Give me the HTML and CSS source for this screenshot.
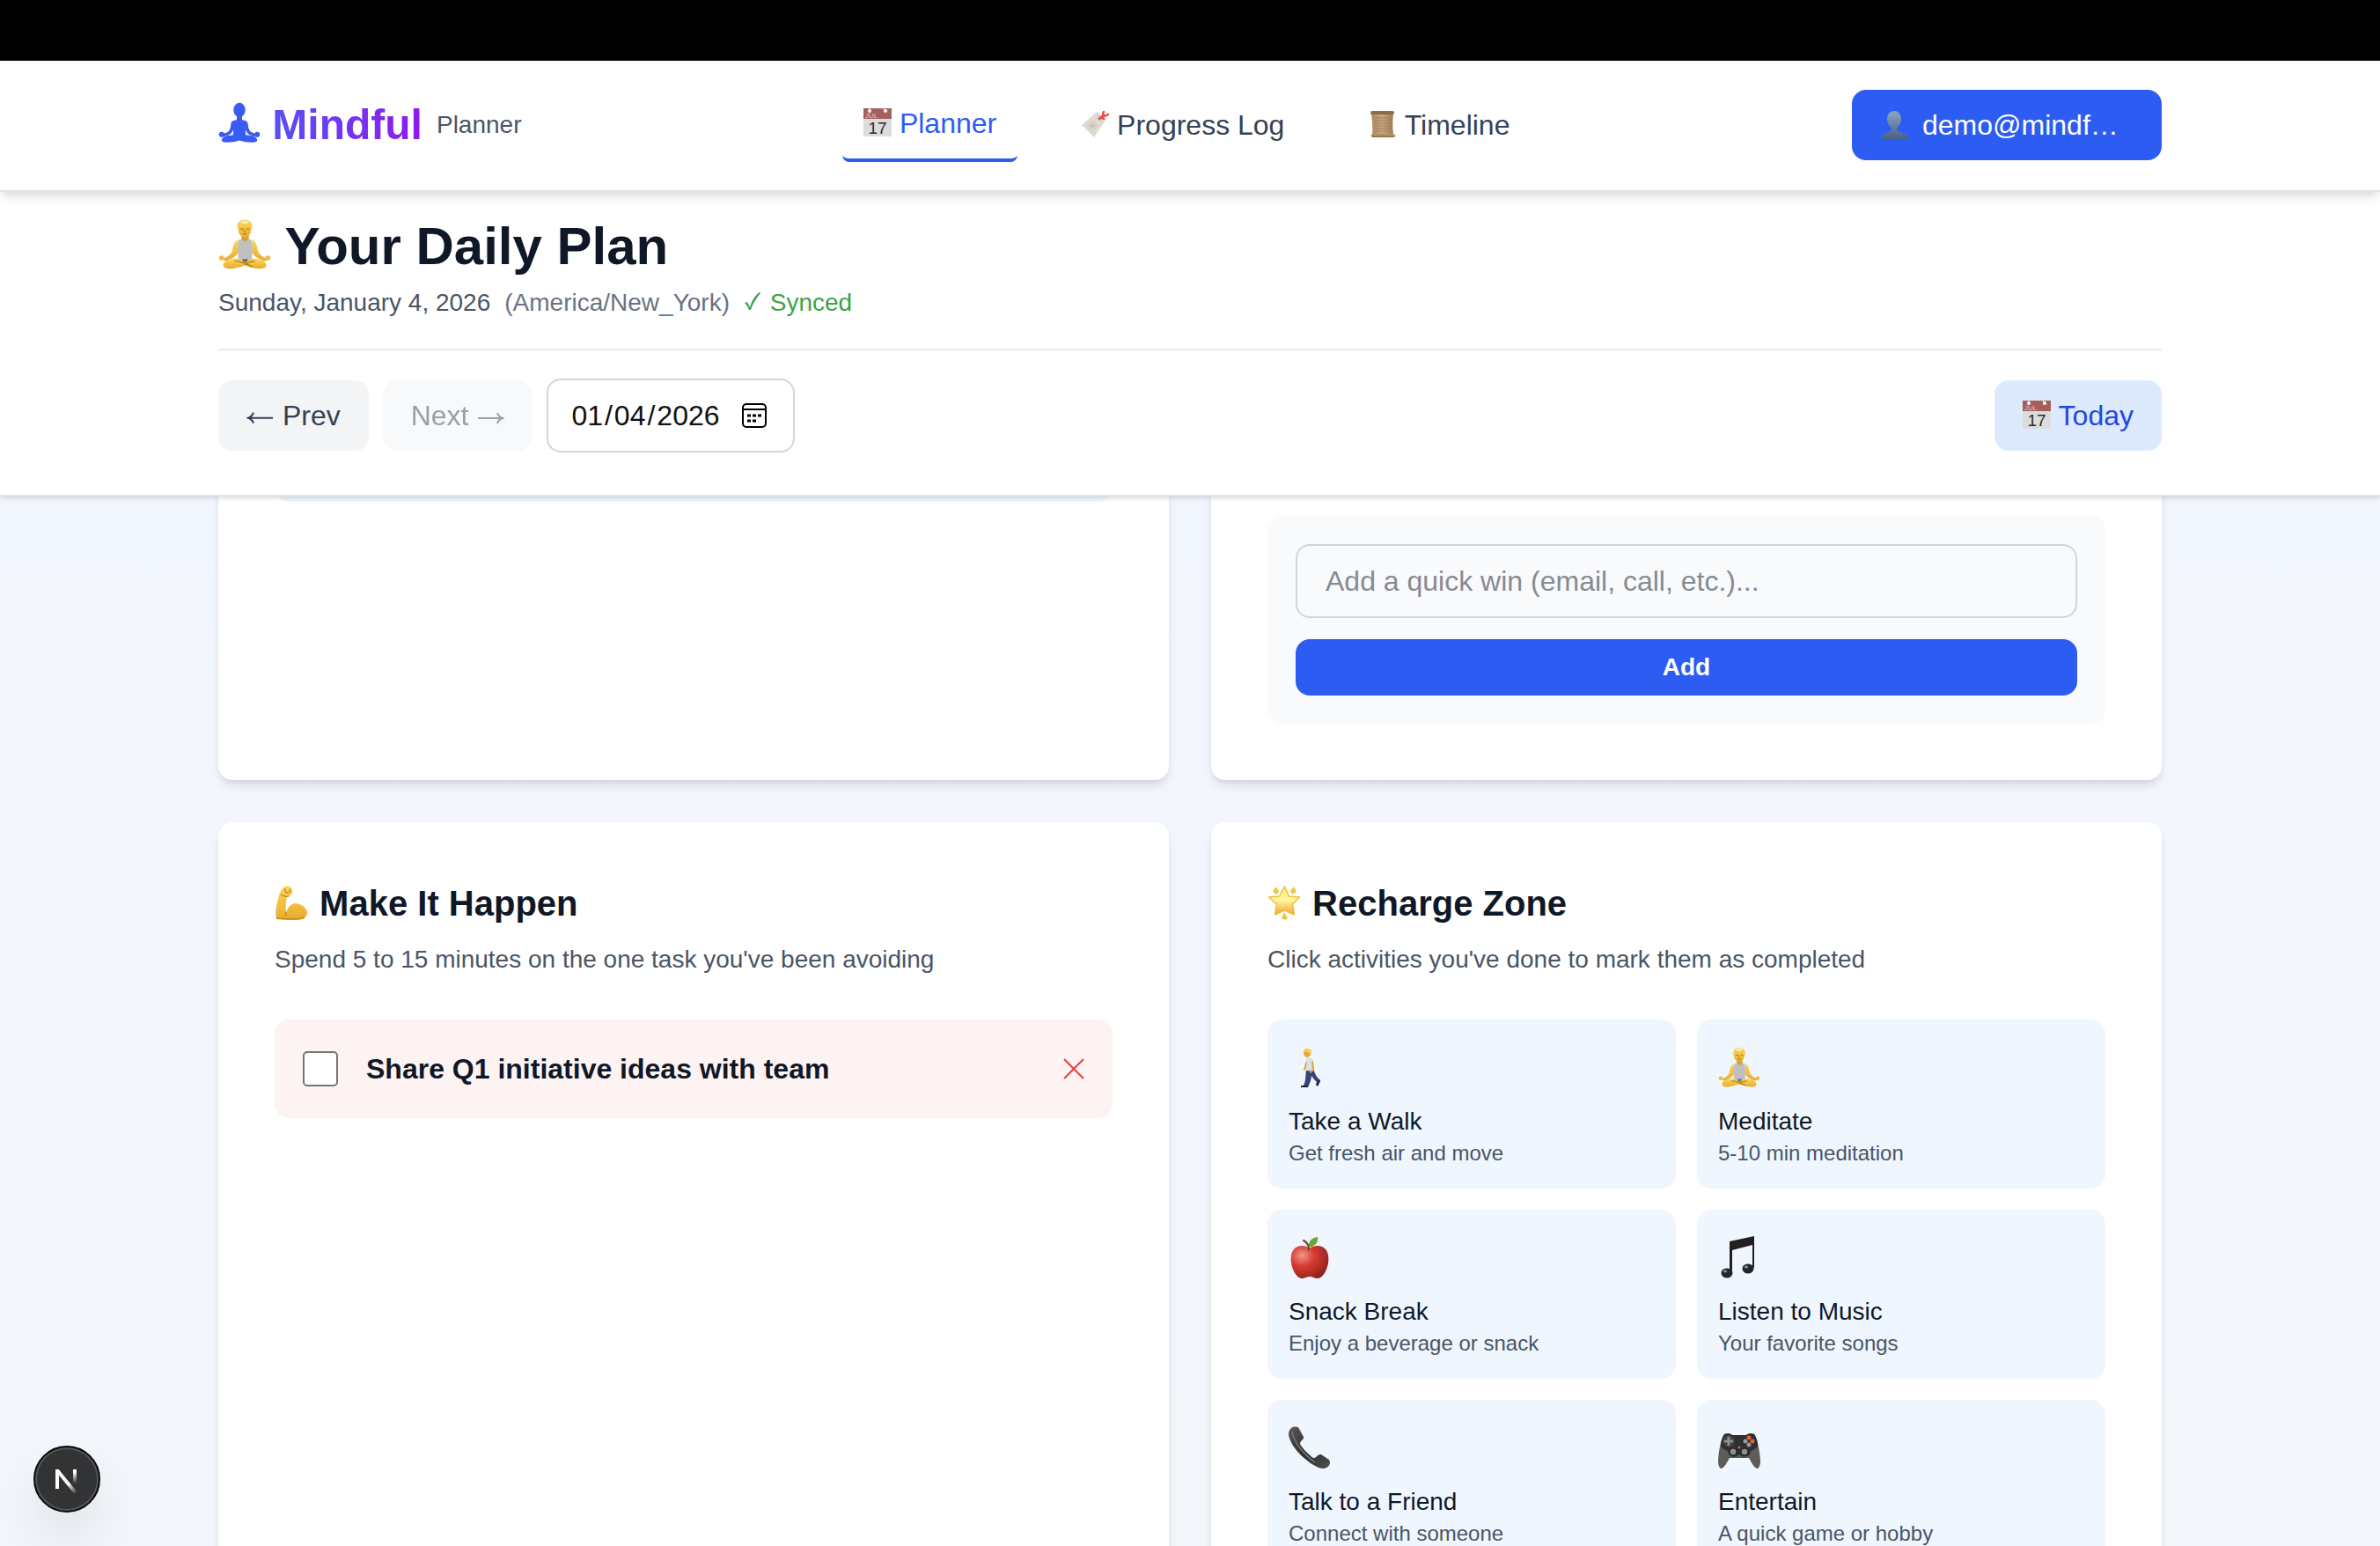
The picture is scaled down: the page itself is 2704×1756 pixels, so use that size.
FILE: index.html
```html
<!DOCTYPE html>
<html lang="en">
<head>
    <meta charset="UTF-8">
    <meta name="viewport" content="width=device-width, initial-scale=1.0">
    <title>Mindful Planner</title>
    <link rel="stylesheet" href="styles.css">
</head>
<body>
    <!-- Shared icon sprite -->
    <svg class="sprite" aria-hidden="true">
        <defs>
            <linearGradient id="skin" x1="0" y1="0" x2="0" y2="1">
                <stop offset="0" stop-color="#fbd65a"/>
                <stop offset="1" stop-color="#e8ac2c"/>
            </linearGradient>
            <linearGradient id="starFill" x1="0" y1="0" x2="0" y2="1">
                <stop offset="0" stop-color="#fdf07a"/>
                <stop offset="0.5" stop-color="#fff3a0"/>
                <stop offset="1" stop-color="#f0a42c"/>
            </linearGradient>
            <radialGradient id="appleFill" cx="0.3" cy="0.3" r="0.8">
                <stop offset="0" stop-color="#f0968a"/>
                <stop offset="0.4" stop-color="#d83c32"/>
                <stop offset="1" stop-color="#8e1f1c"/>
            </radialGradient>
            <linearGradient id="bustFill" x1="0" y1="0" x2="0" y2="1">
                <stop offset="0" stop-color="#8aa6c4"/>
                <stop offset="1" stop-color="#466284"/>
            </linearGradient>
            <linearGradient id="paper" x1="0" y1="0" x2="1" y2="0">
                <stop offset="0" stop-color="#a98760"/>
                <stop offset="0.5" stop-color="#c7a780"/>
                <stop offset="1" stop-color="#9c7a52"/>
            </linearGradient>
            <linearGradient id="phoneFill" x1="0" y1="0" x2="1" y2="1">
                <stop offset="0" stop-color="#5a5a5a"/>
                <stop offset="0.5" stop-color="#2e2e2e"/>
                <stop offset="1" stop-color="#505050"/>
            </linearGradient>
            <linearGradient id="fadeDown" gradientUnits="userSpaceOnUse" x1="0" y1="27" x2="0" y2="43">
                <stop offset="0.2" stop-color="#fff"/>
                <stop offset="1" stop-color="#fff" stop-opacity="0"/>
            </linearGradient>
            <linearGradient id="fadeDiag" gradientUnits="userSpaceOnUse" x1="40" y1="43" x2="49" y2="54">
                <stop offset="0" stop-color="#fff"/>
                <stop offset="1" stop-color="#fff" stop-opacity="0"/>
            </linearGradient>
        </defs>

        <symbol id="pose" viewBox="0 0 64 64">
            <ellipse cx="32" cy="12" rx="9" ry="11"/>
            <path d="M28 20h8v7c6 1 9 2 9 8l-4 9 1 9H22l1-9-4-9c0-6 3-7 9-8z"/>
            <path d="M23 32c-3 7-2 12-7 15-3 2-6 3-11 3M41 32c3 7 2 12 7 15 3 2 6 3 11 3" fill="none" stroke="#3a5cf4" stroke-width="5" stroke-linecap="round"/>
            <circle cx="5" cy="49" r="4"/>
            <circle cx="59" cy="49" r="4"/>
            <path d="M22 50c-7 0-16 2-17 7 0 3 3 4 8 4 7 0 13-1 19-3 6 2 12 3 19 3 5 0 8-1 8-4-1-5-10-7-17-7z"/>
        </symbol>

        <symbol id="meditate" viewBox="0 0 64 64">
            <path d="M24 27c-5 2-6 8-7 14-2 4-6 7-11 9l2 3c7-2 13-5 16-10z" fill="url(#skin)"/>
            <path d="M41 27c5 2 6 8 7 14 2 4 6 7 11 9l-2 3c-7-2-13-5-16-10z" fill="url(#skin)"/>
            <rect x="28" y="19" width="9" height="12" fill="#dca02c"/>
            <path d="M25 27l4-1c1 4 6 4 7 0l4 1c2 6 1 14 1 25H24c0-11-1-19 1-25z" fill="#bfbfc2"/>
            <path d="M24 50c-7-1-17 2-18 7 0 4 3 5 7 5 7 0 13-2 19-4 6 2 12 4 19 4 4 0 8-1 7-5-1-5-11-8-18-7l-8 3z" fill="url(#skin)"/>
            <path d="M20 53c8 0 14 3 22 7M44 53c-5 0-9 2-12 4" stroke="#b87a18" stroke-width="1.4" fill="none"/>
            <path d="M29 50h7l-1 4h-5z" fill="#6e7686"/>
            <circle cx="4" cy="49" r="3" fill="#f0ba3a"/>
            <circle cx="60" cy="49" r="3" fill="#f0ba3a"/>
            <ellipse cx="32" cy="14" rx="8" ry="10" fill="url(#skin)"/>
            <path d="M23 15c-1-9 3-12 9-12s10 3 9 12c-1-4-2-6-5-6-4 0-8-2-9-1-2 1-3 3-4 7z" fill="#f2cd52"/>
            <path d="M26 6c4-3 9-3 12 0-4 2-8 2-12 0z" fill="#fbeeb8"/>
            <path d="M27 14h4M34 14h4M32 15v3M30 20h4" stroke="#9a6418" stroke-width="1" fill="none"/>
        </symbol>

        <symbol id="tag" viewBox="0 0 32 32">
            <path d="M1 17L18 2l11 8-14 21z" fill="#dfdad4"/>
            <path d="M13 12v12M7 18h12M9 14l8 8M17 14l-8 8" stroke="#c2bbb2" stroke-width="1" fill="none"/>
            <circle cx="22" cy="9" r="3" fill="#c9c2ba"/>
            <path d="M21 10l6-4M23 8l3 2M25 7c0-3 0-4 1-5M27 7l4-2" stroke="#e5504a" stroke-width="2.500" fill="none" stroke-linecap="round"/>
        </symbol>

        <symbol id="scroll" viewBox="0 0 32 32">
            <path d="M3 4h25c-1 8-1 16 0 24H4c1-8 0-16-1-24z" fill="url(#paper)"/>
            <rect x="2" y="1" width="27" height="4" rx="2" fill="#8c6c48"/>
            <path d="M4 27h24l2 1c1 1 0 3-1 3H4c-1 0-2-3 0-4z" fill="#b8946a"/>
            <path d="M7 9h17M7 12h17M7 15h17M7 18h17M7 21h17M7 24h17" stroke="#a5845f" stroke-width="1"/>
            <path d="M4 30h24" stroke="#765634" stroke-width="1"/>
        </symbol>

        <symbol id="bust" viewBox="0 0 32 32">
            <path d="M16 0c-5 0-8 4-8 9 0 4 2 8 5 10 0 3-1 4-4 5-5 2-8 3-8 8h31c0-5-4-6-9-8-3-1-4-2-4-5 3-2 5-6 5-10 0-5-3-9-8-9z" fill="url(#bustFill)"/>
        </symbol>

        <symbol id="biceps" viewBox="0 0 40 40">
            <path d="M11 2c3-2 8 0 9 3 1 3 0 5-2 7l-4 2c-1 5-2 10-1 17 2-5 5-9 10-10 7 0 14 5 14 11 0 5-6 8-14 8-7 0-13 0-21-2-2-9 1-18 3-26 1-4 3-8 6-10z" fill="url(#skin)"/>
            <path d="M2 38c11 0 21 3 32-1M13 31c-1 3-1 3 1 4" stroke="#d08f22" stroke-width="2" fill="none"/>
            <path d="M12 4c-1 3 0 4 2 5 3 0 4-2 3-4M7 11c3 2 6 3 9 2" stroke="#bd8422" stroke-width="1.3" fill="none"/>
        </symbol>

        <symbol id="star" viewBox="0 0 40 40">
            <path d="M19.500 2l5 11 12 1-8 8 2 12-11-5-11 5 2-12-9-8 12-1z" fill="url(#starFill)" stroke="#f0bd3c" stroke-width="1.500" stroke-linejoin="round"/>
            <path d="M6 8l3-6 4 5-2 4zM33 8l-3-6-4 5 2 4zM16 38l3-7 4 7-3 2z" fill="#f2c440"/>
        </symbol>

        <symbol id="walk" viewBox="0 0 48 48">
            <path d="M20 27c-1 7 0 12-3 18h-3v2h8c2-5 4-9 4-13 2 3 4 5 6 7l-1 3 2 1 3-6c-5-4-6-8-8-13z" fill="#36407c"/>
            <path d="M14 45h8v2h-8zM31 44l4-6 1 2-3 6z" fill="#1f2333"/>
            <path d="M20 14c3-2 7-1 8 3 1 4 0 8 0 12l-8-1c-1-5-2-9 0-14z" fill="#dcdfe6"/>
            <path d="M27 18l1 8-3 4M20 20l-2 7" stroke="#e0a530" stroke-width="2" fill="none" stroke-linecap="round"/>
            <ellipse cx="21" cy="8" rx="4" ry="5" fill="#e3a938"/>
            <path d="M17 7c0-4 3-5 5-4 4 0 5 4 3 8-1-3-3-5-8-4z" fill="#f5cd55"/>
        </symbol>

        <symbol id="apple" viewBox="0 0 48 48">
            <path d="M24 14c5-4 14-4 18 1 5 6 4 17 0 25-3 6-7 9-11 8-3-1-4-2-7-2s-4 1-7 2c-4 1-8-2-11-8C2 32 1 21 6 15c4-5 13-5 18-1z" fill="url(#appleFill)"/>
            <path d="M23 15c0-4-2-8-6-10" stroke="#5e3a20" stroke-width="2" fill="none" stroke-linecap="round"/>
            <path d="M23 13c-1-7 3-11 10-12 1 6-3 11-10 12z" fill="#6aa636"/>
        </symbol>

        <symbol id="music" viewBox="0 0 48 48">
            <path d="M13 6L41 0v36h-2V10l-23 6v26h-3z" fill="#231f20"/>
            <ellipse cx="10" cy="42" rx="6.500" ry="5.500" fill="#22282e"/>
            <ellipse cx="34" cy="37" rx="6.500" ry="5.500" fill="#22282e"/>
            <ellipse cx="8" cy="40" rx="2" ry="1.500" fill="#8b99a6"/>
            <ellipse cx="32" cy="35" rx="2" ry="1.500" fill="#8b99a6"/>
        </symbol>

        <symbol id="phone" viewBox="0 0 48 48">
            <path d="M3 2c4-2 8-2 9 1l5 9c1 3-4 4-4 8 3 6 11 13 15 16 3 1 5-5 9-4l9 6c2 3 1 7-3 9-5 3-15-2-23-9C10 30 2 20 0 10c0-4 1-6 3-8z" fill="url(#phoneFill)"/>
            <path d="M4 6c2 12 12 25 26 35" stroke="#777" stroke-width="1.500" fill="none"/>
        </symbol>

        <symbol id="gamepad" viewBox="0 0 48 48">
            <path d="M7 9c3-1 7-1 9 1h16c2-2 6-2 9-1 4 6 6 17 7 30 0 4-1 8-3 9-4 0-7-7-10-12H13c-3 5-6 12-10 12-2-1-3-5-3-9C1 26 3 15 7 9z" fill="#5c5c5a"/>
            <path d="M7 9c3-1 7-1 9 1h16c2-2 6-2 9-1 2 3 4 8 4 13-2 4-6 5-8 6-1 8-9 8-13 4-4 4-12 4-13-4-2-1-6-2-8-6 0-5 2-10 4-13z" fill="#2d2f30"/>
            <circle cx="12" cy="17" r="6" fill="#3c3e3e" stroke="#6d4a35"/>
            <path d="M12 12v10M7 17h10" stroke="#8c8f90" stroke-width="3"/>
            <circle cx="35" cy="13" r="2.500" fill="#e8622c"/>
            <circle cx="39" cy="17" r="2.500" fill="#e8622c"/>
            <circle cx="31" cy="17" r="2.500" fill="#9a9da0"/>
            <circle cx="35" cy="21" r="2.500" fill="#9a9da0"/>
            <circle cx="17" cy="29" r="4" fill="#8d9092" stroke="#1c1c1c"/>
            <circle cx="30" cy="29" r="4" fill="#8d9092" stroke="#1c1c1c"/>
            <circle cx="24" cy="24" r="1.500" fill="#c46a35"/>
        </symbol>

        <symbol id="calendar" viewBox="0 0 32 32">
            <rect width="32" height="32" fill="#dcdcdc"/>
            <rect width="32" height="12" fill="#a5605e"/>
            <circle cx="7" cy="3" r="2" fill="#fff"/>
            <circle cx="25" cy="3" r="2" fill="#fff"/>
            <path d="M7 0v3M23 0l2 3" stroke="#fff" stroke-width="1"/>
        </symbol>

        <symbol id="arrow" viewBox="0 0 32 32">
            <path d="M2 20h28M24 14c1 3 3 5 6 6-3 1-5 3-6 6" fill="none" stroke="currentColor" stroke-width="2"/>
        </symbol>
    </svg>

    <div class="topbar"></div>

    <nav class="navbar">
        <div class="container navbar-inner">
            <a href="#" class="brand">
                <span class="brand-name"><svg class="icon brand-icon"><use href="#pose"/></svg> <span class="brand-text">Mindful</span></span>
                <span class="brand-sub">Planner</span>
            </a>
            <div class="nav-links">
                <a href="#" class="nav-link active"><svg class="icon" viewBox="0 0 32 32"><use href="#calendar"/><text x="2" y="11" class="cal-month">JUL</text><text x="16" y="29" class="cal-day">17</text></svg> Planner</a>
                <a href="#" class="nav-link"><svg class="icon"><use href="#tag"/></svg> Progress Log</a>
                <a href="#" class="nav-link"><svg class="icon"><use href="#scroll"/></svg> Timeline</a>
            </div>
            <button type="button" class="user-btn">
                <svg class="icon"><use href="#bust"/></svg>
                <span class="user-email">demo@mindfulplanner.com</span>
            </button>
        </div>
    </nav>

    <header class="plan-header">
        <div class="container">
            <div class="plan-title">
                <h1><svg class="icon"><use href="#meditate"/></svg> Your Daily Plan</h1>
                <p class="plan-date">
                    <span>Sunday, January 4, 2026</span>
                    <span class="timezone">(America/New_York)</span>
                    <span class="synced"><svg class="check" viewBox="0 0 22 22"><path d="M1 13c2-1 3-1 4 1l2 4C9 11 13 4 18 1l1 1C14 8 10 14 8 21H6C5 18 3 15 1 13z" fill="currentColor"/></svg> Synced</span>
                </p>
            </div>
            <div class="date-nav">
                <button type="button" class="btn"><svg class="icon arrow-left"><use href="#arrow"/></svg> Prev</button>
                <button type="button" class="btn" disabled>Next <svg class="icon"><use href="#arrow"/></svg></button>
                <input type="date" class="date-input" value="2026-01-04" aria-label="Plan date">
                <button type="button" class="btn btn-today"><svg class="icon" viewBox="0 0 32 32"><use href="#calendar"/><text x="2" y="11" class="cal-month">JUL</text><text x="16" y="29" class="cal-day">17</text></svg> Today</button>
            </div>
        </div>
    </header>

    <main class="container cards">
        <section class="card">
            <div class="task"></div>
        </section>

        <section class="card card-form">
            <form class="add-form">
                <input type="text" class="text-input" placeholder="Add a quick win (email, call, etc.)..." aria-label="Quick win">
                <button type="submit" class="btn-add">Add</button>
            </form>
        </section>

        <section class="card">
            <h2><svg class="icon"><use href="#biceps"/></svg> Make It Happen</h2>
            <p class="card-text">Spend 5 to 15 minutes on the one task you've been avoiding</p>
            <div class="avoided-task">
                <input type="checkbox" id="avoidedTask">
                <label for="avoidedTask">Share Q1 initiative ideas with team</label>
                <button type="button" class="remove-btn" aria-label="Remove">
                    <svg viewBox="0 0 24 24" fill="none" stroke="currentColor" stroke-width="2"><path d="M1 1l22 22M23 1L1 23"/></svg>
                </button>
            </div>
        </section>

        <section class="card">
            <h2><svg class="icon"><use href="#star"/></svg> Recharge Zone</h2>
            <p class="card-text">Click activities you've done to mark them as completed</p>
            <div class="activities">
                <button type="button" class="activity">
                    <span class="activity-icon"><svg class="icon"><use href="#walk"/></svg></span>
                    <span class="activity-name">Take a Walk</span>
                    <span class="activity-desc">Get fresh air and move</span>
                </button>
                <button type="button" class="activity">
                    <span class="activity-icon"><svg class="icon"><use href="#meditate"/></svg></span>
                    <span class="activity-name">Meditate</span>
                    <span class="activity-desc">5-10 min meditation</span>
                </button>
                <button type="button" class="activity">
                    <span class="activity-icon"><svg class="icon"><use href="#apple"/></svg></span>
                    <span class="activity-name">Snack Break</span>
                    <span class="activity-desc">Enjoy a beverage or snack</span>
                </button>
                <button type="button" class="activity">
                    <span class="activity-icon"><svg class="icon"><use href="#music"/></svg></span>
                    <span class="activity-name">Listen to Music</span>
                    <span class="activity-desc">Your favorite songs</span>
                </button>
                <button type="button" class="activity">
                    <span class="activity-icon"><svg class="icon"><use href="#phone"/></svg></span>
                    <span class="activity-name">Talk to a Friend</span>
                    <span class="activity-desc">Connect with someone</span>
                </button>
                <button type="button" class="activity">
                    <span class="activity-icon"><svg class="icon"><use href="#gamepad"/></svg></span>
                    <span class="activity-name">Entertain</span>
                    <span class="activity-desc">A quick game or hobby</span>
                </button>
            </div>
        </section>
    </main>

    <button type="button" class="dev-badge" aria-label="Open dev tools">
        <svg viewBox="0 0 76 76" fill="none" stroke-width="4">
            <line x1="27" y1="27" x2="27" y2="49" stroke="#fff"/>
            <line x1="27" y1="28" x2="49" y2="55" stroke="url(#fadeDiag)"/>
            <rect x="45" y="27" width="4" height="16" fill="url(#fadeDown)"/>
        </svg>
    </button>
</body>
</html>
```
FILE: styles.css
```css
* {
    margin: 0;
    padding: 0;
    box-sizing: border-box;
}

body {
    font-family: "Liberation Sans", Arial, sans-serif;
    font-size: 32px;
    line-height: 48px;
    color: #101828;
    background: linear-gradient(180deg, #eff5ff 0%, #f3f6fd 55%, #f3f7fc 100%);
    height: 100vh;
    overflow: hidden;
}

button,
input {
    font: inherit;
    color: inherit;
}

button {
    border: none;
    cursor: pointer;
}

a {
    color: inherit;
    text-decoration: none;
}

.sprite {
    position: absolute;
    width: 0;
    height: 0;
}

.icon {
    width: 1em;
    height: 1em;
    vertical-align: -0.12em;
}

.arrow-left {
    transform: rotate(180deg);
    transform-origin: 50% 62%;
}

.cal-month {
    font-size: 8px;
    fill: #e2c4c3;
}

.cal-day {
    font-size: 19px;
    text-anchor: middle;
    fill: #2b2b2b;
}

.container {
    max-width: 2304px;
    margin: 0 auto;
    padding: 0 48px;
}

.topbar {
    height: 69px;
    background: #000;
}

/* Navigation */
.navbar {
    position: relative;
    z-index: 20;
    background: #fff;
    border-bottom: 2px solid #e4e5ea;
    box-shadow: 0 8px 12px -2px rgba(0, 0, 0, 0.1), 0 4px 8px -4px rgba(0, 0, 0, 0.1);
}

.navbar-inner {
    display: flex;
    align-items: center;
    justify-content: space-between;
    padding-top: 31px;
    padding-bottom: 32px;
}

.brand {
    display: flex;
    align-items: center;
    gap: 16px;
}

.brand-name {
    font-size: 48px;
    line-height: 64px;
    font-weight: bold;
}

.brand-icon {
    fill: #3a5cf4;
}

.brand-text {
    background: linear-gradient(90deg, #5651f4 0%, #9019ee 100%);
    -webkit-background-clip: text;
    background-clip: text;
    -webkit-text-fill-color: transparent;
}

.brand-sub {
    font-size: 28px;
    line-height: 40px;
    color: #4a5565;
}

.nav-links {
    display: flex;
    align-items: center;
    gap: 48px;
}

.nav-link {
    padding: 16px 24px;
    border-radius: 8px;
    color: #364153;
}

.nav-link.active {
    color: #2d5cf3;
    border-bottom: 4px solid #2d5cf3;
}

.user-btn {
    display: flex;
    align-items: center;
    gap: 16px;
    padding: 16px 32px;
    border-radius: 16px;
    background: #2d5cf3;
    color: #fff;
}

.user-email {
    max-width: 240px;
    overflow: hidden;
    text-overflow: ellipsis;
    white-space: nowrap;
    text-align: left;
}

/* Plan header */
.plan-header {
    position: relative;
    z-index: 10;
    padding: 26px 0 48px;
    background: #fff;
    border-bottom: 2px solid #e4e5ea;
    box-shadow: 0 2px 6px rgba(0, 0, 0, 0.1), 0 2px 4px -2px rgba(0, 0, 0, 0.1);
}

.plan-title {
    padding-bottom: 32px;
    border-bottom: 2px solid #e5e7eb;
}

h1 {
    font-size: 60px;
    line-height: 72px;
    margin-bottom: 8px;
}

.plan-date {
    display: flex;
    gap: 16px;
    font-size: 28px;
    line-height: 40px;
    color: #4a5565;
}

.timezone {
    color: #6a7282;
}

.synced {
    color: #3ca348;
}

.check {
    width: 22px;
    height: 22px;
}

.date-nav {
    display: flex;
    align-items: center;
    gap: 16px;
    padding-top: 32px;
}

.btn {
    padding: 16px 32px;
    border-radius: 16px;
    background: #f3f4f6;
    color: #364153;
}

.btn:disabled {
    opacity: 0.5;
    cursor: not-allowed;
}

.btn-today {
    margin-left: auto;
    background: #ddeafe;
    color: #2447df;
}

.date-input {
    width: 282px;
    height: 84px;
    padding: 16px 28px 16px 24px;
    border: 2px solid #d1d5dc;
    border-radius: 16px;
    background: #fff;
    color: #111;
}

.date-input::-webkit-datetime-edit-month-field,
.date-input::-webkit-datetime-edit-day-field,
.date-input::-webkit-datetime-edit-year-field {
    padding: 0 2px;
}

.date-input::-webkit-calendar-picker-indicator {
    width: 32px;
    height: 32px;
    padding: 0;
    margin: 0;
    background: url("data:image/svg+xml,%3Csvg xmlns='http://www.w3.org/2000/svg' viewBox='0 0 32 32'%3E%3Crect x='3' y='3' width='26' height='26' rx='4' fill='none' stroke='%23000' stroke-width='2'/%3E%3Cpath d='M3 9h26' stroke='%23000' stroke-width='2'/%3E%3Cpath d='M8 16h4m2 0h4m2 0h4M8 22h4m2 0h4' stroke='%23000' stroke-width='3'/%3E%3C/svg%3E") center / contain no-repeat;
}

.cards {
    display: grid;
    grid-template-columns: 1fr 1fr;
    gap: 48px;
    margin-top: -130px;
}

.card {
    padding: 64px;
    border-radius: 16px;
    background: #fff;
    box-shadow: 0 8px 12px -2px rgba(0, 0, 0, 0.1), 0 4px 8px -4px rgba(0, 0, 0, 0.1);
}

.card-form {
    display: flex;
    flex-direction: column;
    justify-content: flex-end;
    min-height: 452px;
}

.task {
    height: 72px;
    border-radius: 16px;
    background: #eff6fe;
}

.add-form {
    display: flex;
    flex-direction: column;
    gap: 24px;
    padding: 32px;
    border-radius: 16px;
    background: #f9fafc;
}

.text-input {
    width: 100%;
    padding: 16px 32px;
    border: 2px solid #d1d5dc;
    border-radius: 16px;
    background: transparent;
    line-height: 48px;
}

.text-input::placeholder {
    color: #868a93;
}

.btn-add {
    padding: 12px 32px;
    border-radius: 16px;
    background: #2d5cf3;
    color: #fff;
    font-size: 28px;
    line-height: 40px;
    font-weight: bold;
}

h2 {
    font-size: 40px;
    line-height: 56px;
    margin-bottom: 16px;
}

.card-text {
    font-size: 28px;
    line-height: 40px;
    margin-bottom: 48px;
    color: #4a5565;
}

.avoided-task {
    display: flex;
    align-items: center;
    gap: 32px;
    padding: 32px;
    border-radius: 16px;
    background: #fcf3f2;
    font-weight: bold;
}

.avoided-task label {
    flex: 1;
}

.avoided-task input {
    appearance: none;
    width: 40px;
    height: 40px;
    border: 2px solid #767676;
    border-radius: 5px;
    background: #fff;
}

.remove-btn {
    display: flex;
    background: none;
    color: #ec3d3b;
}

.remove-btn svg {
    width: 24px;
    height: 24px;
}

.activities {
    display: grid;
    grid-template-columns: 1fr 1fr;
    gap: 24px;
}

.activity {
    display: flex;
    flex-direction: column;
    padding: 24px;
    border-radius: 16px;
    background: #eff6fe;
    text-align: left;
}

.activity-icon {
    font-size: 48px;
    line-height: 64px;
    margin-bottom: 8px;
}

.activity-name {
    font-size: 28px;
    line-height: 40px;
}

.activity-desc {
    font-size: 24px;
    line-height: 32px;
    color: #4a5565;
}

.dev-badge {
    position: fixed;
    left: 38px;
    bottom: 38px;
    z-index: 30;
    width: 76px;
    height: 76px;
    border: 2px solid #0a0a0a;
    border-radius: 50%;
    background: #323335;
    box-shadow: inset 0 0 0 2px #555658, 0 32px 64px -16px rgba(0, 0, 0, 0.24);
}

.dev-badge svg {
    display: block;
    width: 76px;
    height: 76px;
    margin: -2px;
}
```
